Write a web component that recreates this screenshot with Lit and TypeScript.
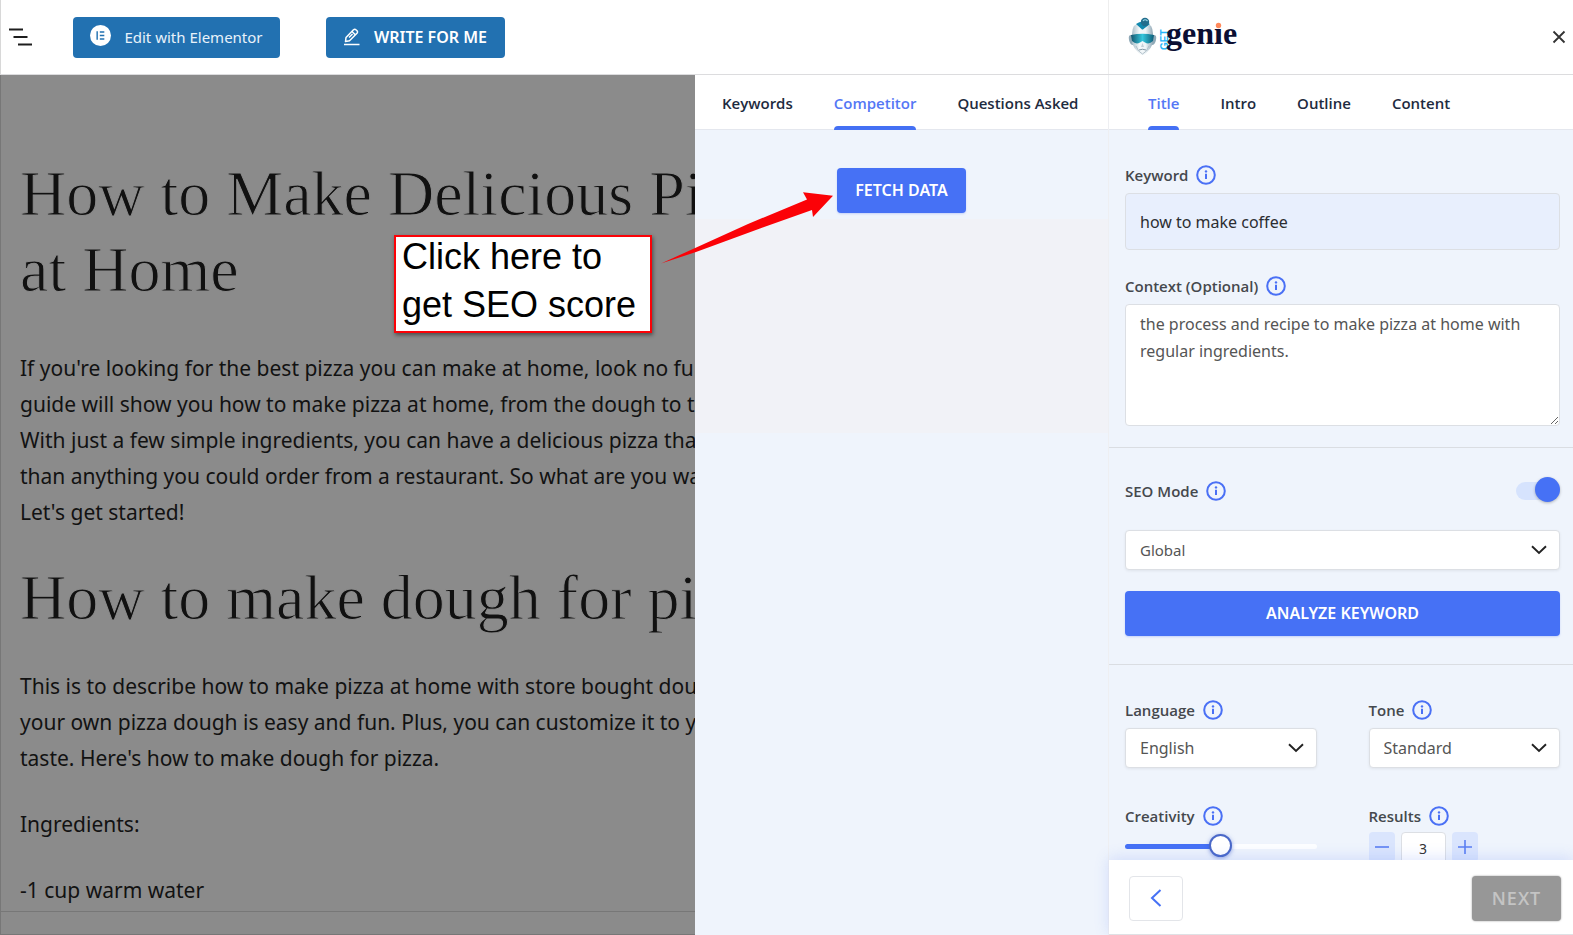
import { LitElement, html, css } from "lit";
import { customElement, state } from "lit/decorators.js";

const chevron = html`<svg class="chevron" viewBox="0 0 16 10" width="16" height="10" aria-hidden="true">
  <path d="M1 1.2 L8 8 L15 1.2" fill="none" stroke="#222" stroke-width="1.9" />
</svg>`;

@customElement("info-icon")
export class InfoIcon extends LitElement {
  static styles = css`
    :host { display: inline-flex; width: 20px; height: 20px; }
  `;
  render() {
    return html`<svg viewBox="0 0 20 20" width="20" height="20" aria-hidden="true">
      <circle cx="10" cy="10" r="8.8" fill="none" stroke="#4a70f5" stroke-width="2" />
      <path d="M10 8.8 V14" stroke="#4a70f5" stroke-width="2" />
      <circle cx="10" cy="6.400" r="1.200" fill="#4a70f5" />
    </svg>`;
  }
}

@customElement("genie-logo")
export class GenieLogo extends LitElement {
  static styles = css`
    :host { display: inline-flex; }
    .name { font-family: "Liberation Serif", serif; font-weight: 700; font-size: 32px; }
    .get { font-family: "Liberation Sans", sans-serif; font-weight: 700; font-size: 10px; }
  `;
  render() {
    return html`<svg viewBox="0 0 112 40" width="112" height="40" role="img" aria-label="GetGenie">
      <defs>
        <linearGradient id="face" x1="0" x2="1"><stop offset="0" stop-color="#a9bfca" /><stop offset=".35" stop-color="#f4f8fa" /><stop offset=".65" stop-color="#eef4f7" /><stop offset="1" stop-color="#8fa7b5" /></linearGradient>
        <linearGradient id="visor" x1="0" x2="1"><stop offset="0" stop-color="#13566f" /><stop offset=".5" stop-color="#35c6dc" /><stop offset="1" stop-color="#0f5c78" /></linearGradient>
      </defs>
      <path d="M3 18 Q0 18 1 23 Q2 28 5 28 L7 18 Z M26 18 Q29 18 28 23 Q27 28 24 28 L22 18 Z" fill="#8fa9b7" />
      <path d="M4 17 Q4 6 14.500 5 Q25 6 25 17 L25 26 Q23 31 20 34 Q17 38 14.500 38 Q12 38 9 34 Q6 31 4 26 Z" fill="url(#face)" />
      <path d="M8 7 Q14.500 2 22 7 L15.500 12 Q14.500 13 13.500 12 Z" fill="#1289ae" />
      <circle cx="17" cy="5" r="4.200" fill="#236d8c" /><path d="M15 4 Q17 1.500 19.500 4" stroke="#9bd8e8" stroke-width="1.200" fill="none" />
      <path d="M3 18 Q14.500 15.500 26 18 L25 24 Q21 28 17 25.500 L14.500 24 L12 25.500 Q8 28 4 24 Z" fill="url(#visor)" />
      <path d="M14.500 26 L13 30 H16 Z" fill="#c3d0d8" /><path d="M11 33 Q14.500 31.500 18 33" stroke="#8297a5" fill="none" /><path d="M8 29 Q10 35 14.500 37 Q19 35 21 29" stroke="#b0c0c9" fill="none" />
      <text class="get" fill="#25b4f8" transform="translate(40 33) rotate(-90)">GET</text>
      <text class="name" fill="#0b0f33" x="38" y="27">genie</text>
      <rect x="86" y="0" width="11" height="11" fill="#fff" />
      <circle cx="90.500" cy="8.500" r="2.700" fill="#ff8a5c" />
    </svg>`;
  }
}

@customElement("app-root")
export class AppRoot extends LitElement {
  @state() private results = 3;

  static styles = css`
    :host {
      display: flex;
      flex-direction: column;
      height: 100vh;
      min-height: 640px;
      overflow: hidden;
      background: #fff;
      color: #3c434a;
      font-family: "Open Sans", "Noto Sans", sans-serif;
      font-size: 15px;
    }
    *, *::before, *::after { box-sizing: border-box; }
    button, input, select, textarea { font: inherit; color: inherit; margin: 0; }
    button { cursor: pointer; padding: 0; border: 0; display: inline-flex; align-items: center; justify-content: center; }
    h1, h2, p { margin: 0; }

    .top { display: flex; flex: none; height: 75px; border-bottom: 1px solid #dcdcde; }
    .tools { flex: 1; display: flex; align-items: center; padding-left: 8px; border-left: 1px solid #d8d8d8; }
    .outline { width: 24px; height: 24px; background: none; margin-right: 40px; }
    .blue { height: 41px; background: #2271b1; color: #e8f1fa; border-radius: 4px; font-family: "Noto Sans", sans-serif; font-size: 15px; }
    .elementor { width: 207px; gap: 13px; }
    .write { width: 179px; gap: 14px; margin-left: 46px; font-weight: 600; font-size: 16px; color: #fff; }
    .elementor svg { margin-top: -4px; }
    .brand { flex: none; width: 465px; border-left: 1px solid #eee; display: flex; align-items: center; justify-content: space-between; padding: 0 6px 0 19px; }
    .close { width: 16px; height: 16px; background: none; }

    .main { flex: 1; display: flex; min-height: 0; position: relative; }
    .editor { flex: 1; min-width: 0; overflow: hidden; background: #8b8b8b; border-left: 1px solid #777; display: flex; flex-direction: column; color: #121212; }
    .doc { flex: 1; min-height: 0; overflow: hidden; padding: 81px 0 0 19px; white-space: nowrap; }
    .doc h1, .doc h2 { font-family: "Liberation Serif", serif; font-weight: 400; font-size: 64px; line-height: 76px; color: #111; -webkit-text-stroke: 1px #8b8b8b; }
    .doc h1 { margin-bottom: 42px; }
    .doc h2 { margin: 30px 0 32px; }
    .doc p { font-family: "Noto Sans", sans-serif; font-size: 21px; line-height: 36px; }
    .doc p + p { margin-top: 30px; }
    .crumbs { flex: none; height: 24px; border-top: 1px solid #777; border-bottom: 1px solid #777; }

    .panel { flex: none; width: 413px; background: linear-gradient(#eff4fc 144px, #f1f2f7 144px, #f1f2f7 358px, #eff4fc 358px); display: flex; flex-direction: column; align-items: stretch; }
    .tabs { flex: none; display: flex; height: 55px; gap: 41px; background: #fff; border-bottom: 1px solid #e4e7ee; padding-left: 27px; }
    .tab { position: relative; background: none; height: 55px; font-size: 15px; font-weight: 600; color: #1e2b40; }
    .tab.on { color: #5477f5; }
    .tab.on::after { content: ""; position: absolute; left: 0; right: 0; bottom: 0; height: 4px; border-radius: 4px 4px 0 0; background: #4470f4; }
    .primary { height: 45px; border-radius: 4px; background: #4671f5; color: #fff; font-family: "Noto Sans", sans-serif; font-weight: 600; font-size: 16px; line-height: 20px; padding-bottom: 1px; box-shadow: 0 1px 2px #4671f540; }
    .fetch { width: 129px; margin: 38px auto 0; }

    .side { flex: none; width: 465px; background: #eff4fc; border-left: 1px solid #eeeff2; display: flex; flex-direction: column; min-height: 0; }
    .side .tabs { padding-left: 39px; }
    .form { flex: 1; min-height: 0; overflow: hidden; }
    .group { padding: 31px 13px 21px 16px; border-bottom: 1px solid #dadde2; display: flex; flex-direction: column; }
    .group.seo { padding-top: 29px; padding-bottom: 28px; }
    .group.last { border-bottom: 0; }
    .label { display: flex; align-items: center; gap: 8px; height: 28px; font-size: 15px; font-weight: 600; color: #45484d; }
    .box { width: 100%; border: 1px solid #dcdfe4; border-radius: 4px; background: #fff; padding: 0 14px; font-family: "Noto Sans", sans-serif; font-size: 16px; display: block; outline: 0; color: #555; }
    .keyword { height: 57px; background: #e8effd; color: #2b2d31; margin-bottom: 22px; margin-top: 4px; }
    .context { height: 122px; padding-top: 6px; line-height: 27px; margin-top: 4px; resize: vertical; }
    .row { display: flex; align-items: center; justify-content: space-between; }
    .switch { position: relative; width: 44px; height: 28px; }
    .switch input { appearance: none; width: 44px; height: 18px; margin: 5px 0 0; border-radius: 9px; background: #d6e3fd; display: block; }
    .switch span { position: absolute; right: 0; top: 0; width: 25px; height: 25px; border-radius: 50%; background: #4671f5; box-shadow: 0 1px 3px #0004; pointer-events: none; }
    .select { position: relative; display: flex; align-items: center; }
    .select select { appearance: none; height: 40px; box-shadow: 0 1px 3px #0001; }
    .chevron { position: absolute; right: 13px; pointer-events: none; }
    .country { margin: 25px 0 21px; }
    .country select { font-size: 15px; }
    .grid { display: grid; grid-template-columns: 1fr 1fr; gap: 34px 52px; }
    .field .select { margin-top: 4px; }
    .slider { appearance: none; display: block; width: 100%; height: 24px; margin: 4px 0 0; background: none; }
    .slider::-webkit-slider-runnable-track { height: 5px; border-radius: 3px; background: linear-gradient(90deg, #4671f5 50%, #fdfeff 50%); }
    .slider::-webkit-slider-thumb { appearance: none; width: 23px; height: 23px; margin-top: -10px; border-radius: 50%; border: 2px solid #4a68c8; background: #fff; box-shadow: 0 1px 4px #3457c888; }
    .stepper { display: flex; gap: 6px; margin-top: 2px; }
    .step { width: 26px; height: 30px; border-radius: 4px; background: #dae5fd; }
    .count { width: 45px; height: 33px; padding: 0; text-align: center; font-size: 14px; color: #333; }

    .foot { flex: none; height: 75px; position: relative; background: #fff; display: flex; align-items: center; justify-content: space-between; padding: 2px 12px 0 20px; border-bottom: 1px solid #dfe1e5; box-shadow: 0 -2px 14px #4671f52e; }
    .back { width: 54px; height: 45px; border: 1px solid #e3e5e9; border-radius: 4px; background: #fff; }
    .next { width: 89px; height: 45px; border-radius: 4px; background: #979797; color: #c4c4c4; font-size: 18px; font-weight: 600; letter-spacing: 1px; box-shadow: 0 0 2px #0006; }

    .note { position: absolute; left: 394px; top: 160px; width: 258px; height: 98px; border: 2px solid #fb0207; background: #fff; color: #000; padding: 0 6px 2px; display: flex; align-items: flex-end; font-family: "Liberation Sans", Arial, sans-serif; font-size: 36px; line-height: 48px; box-shadow: 1px 2px 4px #0007; white-space: nowrap; }
    .arrow { position: absolute; left: 660px; top: 115px; pointer-events: none; }
  `;

  private tabs(names: string[], active: string) {
    return html`<nav class="tabs">${names.map((n) => html`<button class="tab ${n === active ? "on" : ""}">${n}</button>`)}</nav>`;
  }

  private select(id: string, value: string, cls = "") {
    return html`<div class="select ${cls}"><select class="box" id=${id} aria-label=${value}><option>${value}</option></select>${chevron}</div>`;
  }

  render() {
    return html`
      <header class="top">
        <div class="tools">
          <button class="outline" aria-label="Document overview">
            <svg viewBox="0 0 24 24" width="24" height="24"><path d="M0 4.500 H14 M4.500 12 H18.500 M9 19.500 H23" stroke="#1e1e1e" stroke-width="1.800" /></svg>
          </button>
          <button class="blue elementor">
            <svg viewBox="0 0 22 22" width="21" height="21"><circle cx="11" cy="11" r="11" fill="#fff" /><path d="M7.500 6.500 V15.500 M10.300 7.300 H15 M10.300 11 H15 M10.300 14.700 H15" stroke="#2271b1" stroke-width="1.500" /></svg>
            Edit with Elementor
          </button>
          <button class="blue write">
            <svg viewBox="0 0 16 18" width="16" height="18" fill="none" stroke="#fff" stroke-width="1.500" stroke-linejoin="round"><path d="M1.500 13.500 L2 9.500 L9.500 1.800 Q10.800 .8 12.200 2 L13 2.800 Q14 4 13 5.300 L5.500 12.800 Z M8 3.500 L11.500 7 M5 9.500 L8.500 6 M0 16.600 H15.500" /></svg>
            WRITE FOR ME
          </button>
        </div>
        <div class="brand">
          <genie-logo></genie-logo>
          <button class="close" aria-label="Close"><svg viewBox="0 0 16 16" width="16" height="16"><path d="M2.500 2.500 L13.500 13.500 M13.500 2.500 L2.500 13.500" stroke="#333" stroke-width="1.800" /></svg></button>
        </div>
      </header>
      <div class="main">
        <main class="editor">
          <article class="doc">
            <h1>How to Make Delicious Pizza<br />at Home</h1>
            <p>If you're looking for the best pizza you can make at home, look no further.<br />guide will show you how to make pizza at home, from the dough to the<br />With just a few simple ingredients, you can have a delicious pizza that<br />than anything you could order from a restaurant. So what are you waiting<br />Let's get started!</p>
            <h2>How to make dough for pizza</h2>
            <p>This is to describe how to make pizza at home with store bought dough.<br />your own pizza dough is easy and fun. Plus, you can customize it to your<br />taste. Here's how to make dough for pizza.</p>
            <p>Ingredients:</p>
            <p>-1 cup warm water</p>
          </article>
          <div class="crumbs"></div>
        </main>
        <section class="panel">
          ${this.tabs(["Keywords", "Competitor", "Questions Asked"], "Competitor")}
          <button class="primary fetch">FETCH DATA</button>
        </section>
        <aside class="side">
          ${this.tabs(["Title", "Intro", "Outline", "Content"], "Title")}
          <div class="form">
            <div class="group">
              <label class="label" for="keyword">Keyword <info-icon></info-icon></label>
              <input class="box keyword" id="keyword" .value=${"how to make coffee"} />
              <label class="label" for="context">Context (Optional) <info-icon></info-icon></label>
              <textarea class="box context" id="context" .value=${"the process and recipe to make pizza at home with regular ingredients."}></textarea>
            </div>
            <div class="group seo">
              <div class="row">
                <label class="label" for="seo">SEO Mode <info-icon></info-icon></label>
                <div class="switch"><input id="seo" type="checkbox" role="switch" checked /><span></span></div>
              </div>
              ${this.select("country", "Global", "country")}
              <button class="primary">ANALYZE KEYWORD</button>
            </div>
            <div class="group last">
              <div class="grid">
                <div class="field"><label class="label" for="language">Language <info-icon></info-icon></label>${this.select("language", "English")}</div>
                <div class="field"><label class="label" for="tone">Tone <info-icon></info-icon></label>${this.select("tone", "Standard")}</div>
                <div class="field"><label class="label" for="creativity">Creativity <info-icon></info-icon></label><input class="slider" id="creativity" type="range" min="0" max="100" value="50" /></div>
                <div class="field">
                  <label class="label" for="results">Results <info-icon></info-icon></label>
                  <div class="stepper">
                    <button class="step" aria-label="Fewer" @click=${() => (this.results = Math.max(1, this.results - 1))}><svg viewBox="0 0 14 14" width="14" height="14"><path d="M0 7 H14" stroke="#5b7ff2" stroke-width="1.600" /></svg></button>
                    <input class="box count" id="results" .value=${String(this.results)} />
                    <button class="step" aria-label="More" @click=${() => this.results++}><svg viewBox="0 0 14 14" width="14" height="14"><path d="M0 7 H14 M7 0 V14" stroke="#5b7ff2" stroke-width="1.600" /></svg></button>
                  </div>
                </div>
              </div>
            </div>
          </div>
          <footer class="foot">
            <button class="back" aria-label="Back"><svg viewBox="0 0 12 18" width="12" height="18"><path d="M10.500 1 L2 9 L10.500 17" fill="none" stroke="#4671f5" stroke-width="2" /></svg></button>
            <button class="next" disabled>NEXT</button>
          </footer>
        </aside>
        <div class="note"><span>Click here to<br />get SEO score</span></div>
        <svg class="arrow" viewBox="0 0 180 80" width="180" height="80" aria-hidden="true">
          <path d="M1 73.500 L88 34 L147 9.500 L143 2.300 L173 5.800 L153 27 L152 20 L100 38.500 L36 62 Z" fill="#fb0207" />
        </svg>
      </div>
    `;
  }
}
